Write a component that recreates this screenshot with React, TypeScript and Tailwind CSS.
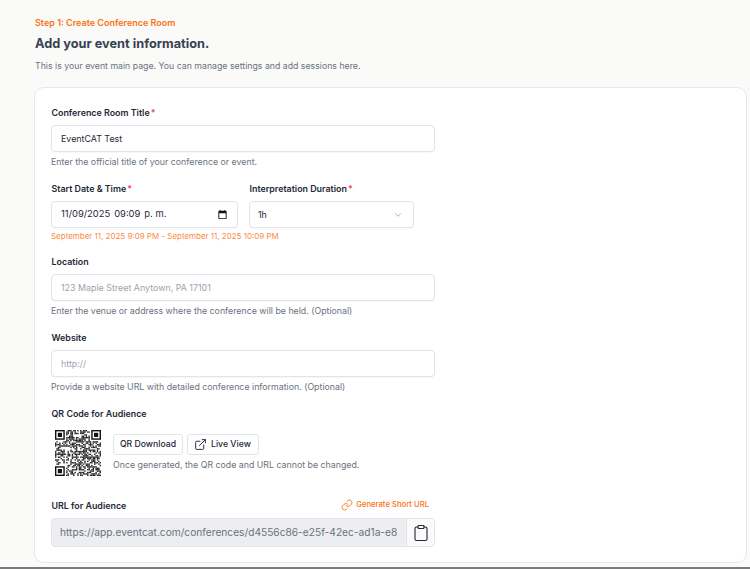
import { ChevronDown, Clipboard, ExternalLink, Link } from "lucide-react"

const font = { fontFamily: "Inter, sans-serif" }

function Finder({ x, y }: { x: number; y: number }) {
  return (
    <g>
      <rect x={x} y={y} width={7} height={7} fill="#111" />
      <rect x={x + 1} y={y + 1} width={5} height={5} fill="#fff" />
      <rect x={x + 2} y={y + 2} width={3} height={3} fill="#111" />
    </g>
  )
}

// pseudo random modules, it only has to look like a QR code
function QrCode() {
  const size = 33
  const cells: { x: number; y: number }[] = []
  for (let y = 0; y < size; y++) {
    for (let x = 0; x < size; x++) {
      const inFinder = (x < 8 && y < 8) || (x > size - 9 && y < 8) || (x < 8 && y > size - 9)
      if (inFinder) continue
      const h = Math.sin(x * 12.9898 + y * 78.233) * 43758.5453
      if (h - Math.floor(h) > 0.5) cells.push({ x, y })
    }
  }
  return (
    <svg viewBox="0 0 33 33" className="h-[46px] w-[46px] shrink-0">
      {cells.map((c) => (
        <rect key={`${c.x}-${c.y}`} x={c.x} y={c.y} width={1} height={1} fill="#222" />
      ))}
      <Finder x={0} y={0} />
      <Finder x={26} y={0} />
      <Finder x={0} y={26} />
    </svg>
  )
}

function Label({ text, required }: { text: string; required?: boolean }) {
  return (
    <div className="h-[14px] pl-[0.5px] text-[8.9px] leading-[16px] font-semibold text-[#1f2937]">
      {text}
      {required && <span className="ml-[1px] text-[#ef4444]">*</span>}
    </div>
  )
}

function Hint({ text }: { text: string }) {
  return <p className="mt-[3px] h-[14px] text-[8.8px] leading-[14px] text-[#6b7280]">{text}</p>
}

const box =
  "mt-[6px] flex h-[27px] items-center rounded-[4px] border border-[#e2e4ea] bg-white px-[9px] text-[8.9px] shadow-[0_1px_1px_rgba(0,0,0,0.03)]"

export default function App() {
  return (
    <div style={font} className="flex h-[569px] w-[750px] flex-col overflow-hidden bg-[#fafaf9]">
      <div className="flex-1 pt-[16px] pr-[3px] pl-[34px]">
        <p className="h-[13px] pl-[1px] text-[9px] leading-[13px] font-semibold text-[#f97316]">
          Step 1: Create Conference Room
        </p>
        <h1 className="mt-[5px] h-[20px] pl-[1px] text-[12.75px] leading-[20px] font-bold text-[#374151]">
          Add your event information.
        </h1>
        <p className="mt-[5px] h-[14px] pl-[1px] text-[8.75px] leading-[14px] text-[#6b7280]">
          This is your event main page. You can manage settings and add sessions here.
        </p>
        <div className="mt-[14px] h-[476px] rounded-[10px] border border-[#e5e7eb] bg-white pt-[17px] pl-[16px]">
          <div className="w-[384px]">
            <Label text="Conference Room Title" required />
            <div className={`${box} text-[#1f2937]`}>EventCAT Test</div>
            <Hint text="Enter the official title of your conference or event." />

            <div className="mt-[12px] flex gap-[11px]">
              <div className="w-[187px]">
                <Label text="Start Date & Time" required />
                <div className={`${box} justify-between text-[#1f2937]`}>
                  <span className="flex gap-[4px] text-[9.4px]">
                    <span>11/09/2025</span>
                    <span>09:09</span>
                    <span>p. m.</span>
                  </span>
                  <svg viewBox="0 0 24 24" className="h-[11px] w-[11px]" fill="#111">
                    <path d="M19 4h-1V2h-2v2H8V2H6v2H5a2 2 0 0 0-2 2v14a2 2 0 0 0 2 2h14a2 2 0 0 0 2-2V6a2 2 0 0 0-2-2zm0 16H5V9h14v11z" />
                  </svg>
                </div>
              </div>
              <div className="w-[165px]">
                <Label text="Interpretation Duration" required />
                <div className={`${box} justify-between pl-[8px] text-[#1f2937]`}>
                  <span>1h</span>
                  <ChevronDown className="mr-[1px] h-[10px] w-[10px] text-[#9ca3af]" />
                </div>
              </div>
            </div>
            <p className="mt-[2px] h-[13px] text-[7.97px] leading-[13px] text-[#fb8a45]">
              September 11, 2025 9:09 PM - September 11, 2025 10:09 PM
            </p>

            <div className="mt-[11px]">
              <Label text="Location" />
              <div className={`${box} text-[#9ca3af]`}>123 Maple Street Anytown, PA 17101</div>
              <Hint text="Enter the venue or address where the conference will be held. (Optional)" />
            </div>

            <div className="mt-[12px]">
              <Label text="Website" />
              <div className={`${box} text-[#9ca3af]`}>http://</div>
              <Hint text="Provide a website URL with detailed conference information. (Optional)" />
            </div>

            <div className="mt-[12px]">
              <Label text="QR Code for Audience" />
              <div className="mt-[10px] flex items-center gap-[12px] pl-[4px]">
                <QrCode />
                <div>
                  <div className="flex gap-[4px]">
                    <span className="flex h-[21px] w-[70px] items-center justify-center rounded-[3px] border border-[#e2e4ea] text-[8.7px] font-medium text-[#1f2937]">
                      QR Download
                    </span>
                    <span className="flex h-[21px] w-[72px] items-center gap-[4px] rounded-[3px] border border-[#e2e4ea] pl-[6px] text-[8.7px] font-medium text-[#1f2937]">
                      <ExternalLink className="h-[13px] w-[13px]" strokeWidth={1.75} />
                      Live View
                    </span>
                  </div>
                  <p className="mt-[3px] h-[14px] text-[8.8px] leading-[14px] text-[#6b7280]">
                    Once generated, the QR code and URL cannot be changed.
                  </p>
                </div>
              </div>
            </div>

            <div className="mt-[22px] flex h-[14px] items-center justify-between">
              <Label text="URL for Audience" />
              <span className="flex items-center gap-[3px] pr-[6px] text-[7.7px] font-medium text-[#f97316]">
                <Link className="h-[12px] w-[12px]" strokeWidth={1.75} />
                Generate Short URL
              </span>
            </div>
            <div className="mt-[6px] flex h-[29px] overflow-hidden rounded-[4px] border border-[#e2e4ea] bg-[#eceef1]">
              <span className="flex min-w-0 flex-1 items-center pl-[8px] text-[10.2px] whitespace-nowrap text-[#6b7280]">
                https://app.eventcat.com/conferences/d4556c86-e25f-42ec-ad1a-e8
              </span>
              <span className="flex w-[28px] shrink-0 items-center justify-center border-l border-[#e2e4ea] bg-[#fafafa]">
                <Clipboard className="h-[18px] w-[18px] text-[#1f2937]" strokeWidth={1.5} />
              </span>
            </div>
          </div>
        </div>
      </div>
      <div className="h-[2px] shrink-0 bg-[#7a7a7a]" />
    </div>
  )
}
